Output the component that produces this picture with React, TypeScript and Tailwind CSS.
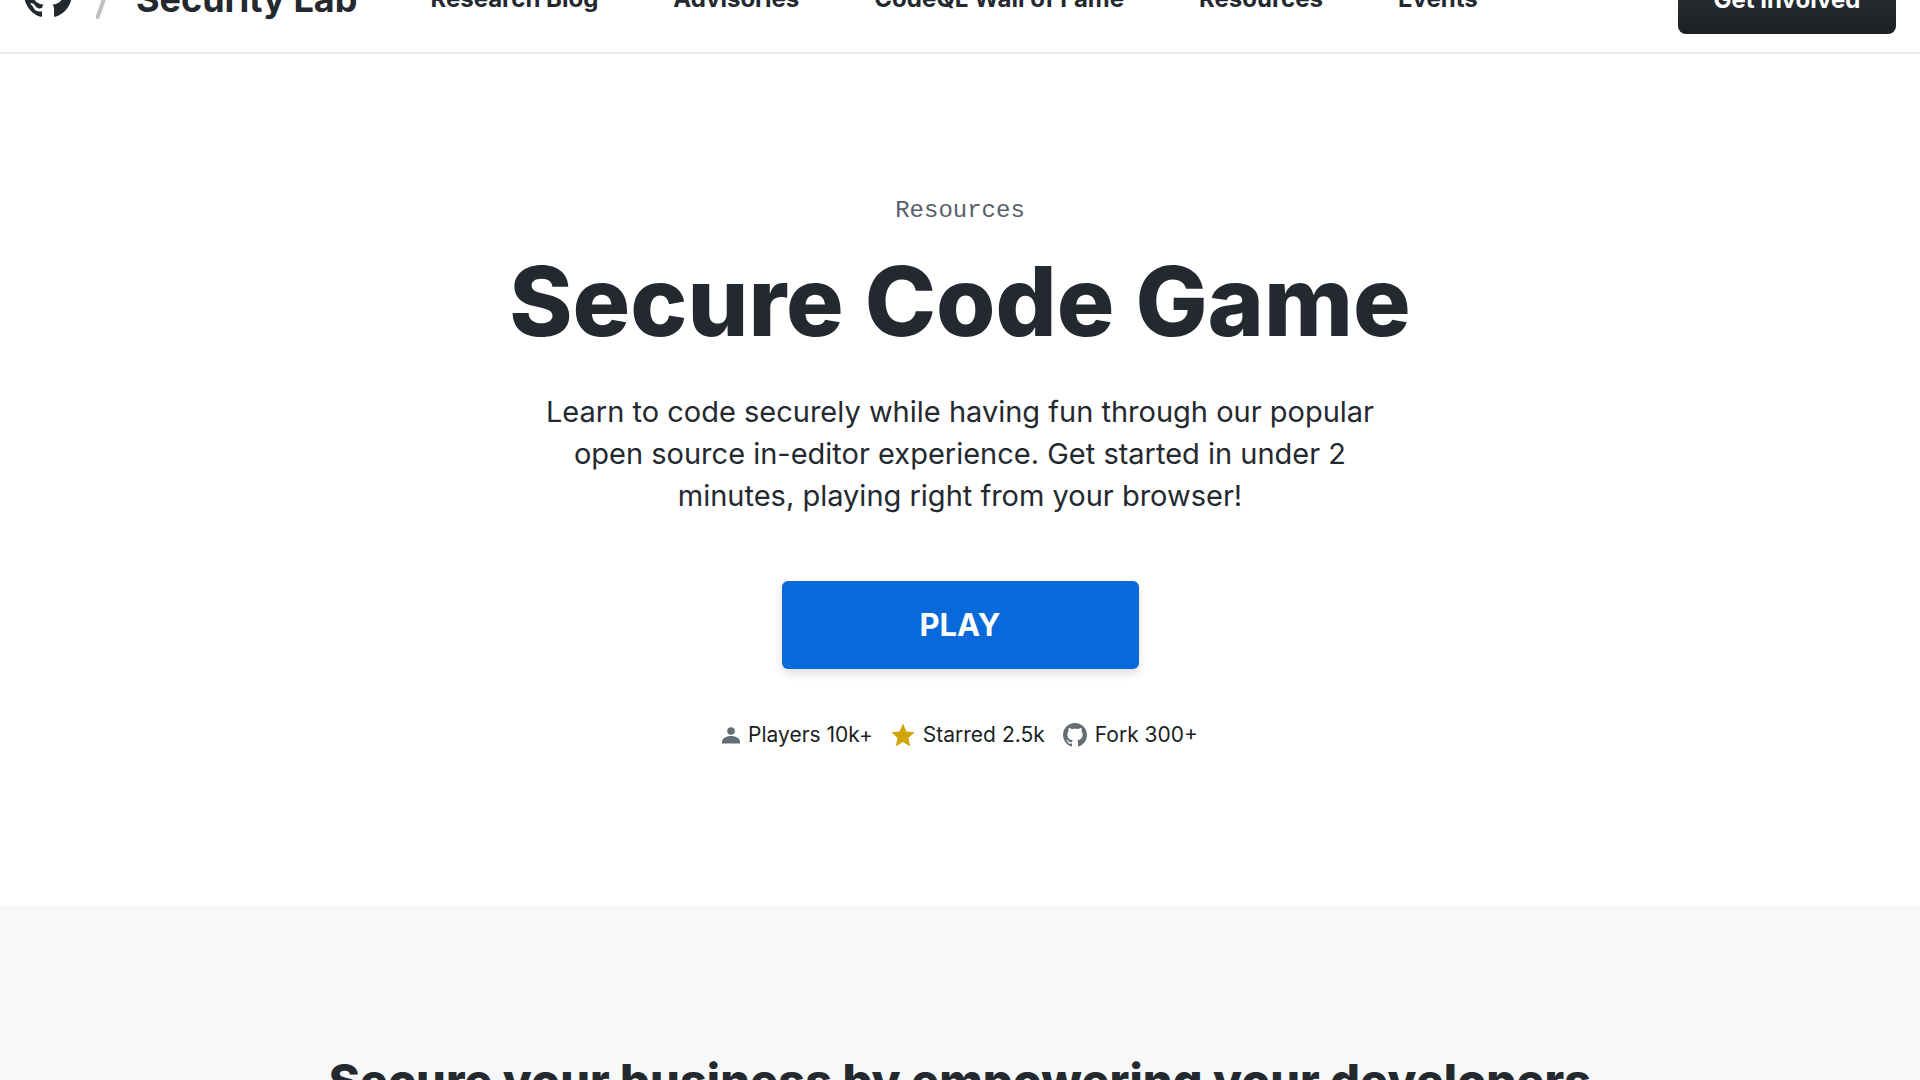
const navLinks = ["Research Blog", "Advisories", "CodeQL Wall of Fame", "Resources", "Events"]

function GithubMark({ className }: { className: string }) {
    return (
        <svg viewBox="0 0 16 16" className={className} fill="currentColor" aria-hidden="true">
            <path d="M8 0C3.58 0 0 3.58 0 8c0 3.54 2.29 6.53 5.47 7.59.4.07.55-.17.55-.38 0-.19-.01-.82-.01-1.49-2.01.37-2.53-.49-2.69-.94-.09-.23-.48-.94-.82-1.13-.28-.15-.68-.52-.01-.53.63-.01 1.08.58 1.23.82.72 1.21 1.87.87 2.33.66.07-.52.28-.87.51-1.07-1.78-.2-3.64-.89-3.64-3.95 0-.87.31-1.59.82-2.15-.08-.2-.36-1.02.08-2.12 0 0 .67-.21 2.2.82.64-.18 1.32-.27 2-.27.68 0 1.36.09 2 .27 1.53-1.04 2.2-.82 2.2-.82.44 1.1.16 1.92.08 2.12.51.56.82 1.27.82 2.15 0 3.07-1.87 3.75-3.65 3.95.29.25.54.73.54 1.48 0 1.07-.01 1.93-.01 2.2 0 .21.15.46.55.38A8.013 8.013 0 0016 8c0-4.42-3.58-8-8-8z" />
        </svg>
    )
}

function PersonIcon() {
    return (
        <svg viewBox="0 0 18 17" className="w-[18px] h-[17px]" fill="#656d76" aria-hidden="true">
            <circle cx="9" cy="4" r="3.8" />
            <path d="M0 16.5v-1.6C0 11.6 3.8 9 9 9s9 2.6 9 5.9v1.6z" />
        </svg>
    )
}

function StarIcon() {
    return (
        <svg viewBox="0 0 24 24" className="size-6" fill="#d0a508" aria-hidden="true">
            <path d="M12 0.5 15.4 8.6 23.8 9.3 17.4 15 19.3 23.5 12 19 4.7 23.5 6.6 15 0.2 9.3 8.6 8.6Z" />
        </svg>
    )
}

function Header() {
    return (
        <header className="-mt-[53px] h-[107px] shrink-0 px-6 flex items-center justify-between border-b-2 border-[#eaebec] bg-white">
            <div className="pb-0.5 flex items-center">
                <div className="flex items-center gap-6">
                    <a href="#" aria-label="GitHub" className="pb-2.5">
                        <GithubMark className="size-12" />
                    </a>
                    <svg viewBox="0 0 16 40" className="w-4 h-10" stroke="#bdc1c4" strokeWidth="4" aria-hidden="true">
                        <path d="M1 40 15 0" />
                    </svg>
                    <a href="#" className="text-4xl font-bold whitespace-nowrap">Security Lab</a>
                </div>
                <nav className="ml-[73px] flex items-center gap-[75px]">
                    {navLinks.map((label) => (
                        <a key={label} href="#" className="text-2xl font-bold whitespace-nowrap">{label}</a>
                    ))}
                </nav>
            </div>
            <a
                href="#"
                className="w-[218px] h-[68px] flex items-center justify-center rounded-lg bg-linear-to-b from-[#32383f] to-[#1b1f24] text-2xl font-bold text-white whitespace-nowrap"
            >
                Get Involved
            </a>
        </header>
    )
}

function Hero() {
    return (
        <section className="pt-[141px] pb-[153px] flex flex-col items-center text-center">
            <p className="font-['Liberation_Mono',monospace] text-2xl leading-8 text-[#57606a]">Resources</p>
            <h1 className="mt-[22px] text-[96px] leading-[104px] font-extrabold whitespace-nowrap">Secure Code Game</h1>
            <p className="mt-[38px] text-[29px] leading-[42px]">
                Learn to code securely while having fun through our popular
                <br />
                open source in-editor experience. Get started in under 2
                <br />
                minutes, playing right from your browser!
            </p>
            <button
                type="button"
                className="mt-16 w-[357px] h-[88px] rounded-md bg-[#0969da] text-[31px] font-bold text-white shadow-[0_4px_10px_rgba(0,0,0,0.14)]"
            >
                PLAY
            </button>
            <ul className="mt-12 flex items-center gap-[18px] text-[21px] leading-9 text-[#1b1f24]">
                <li className="flex items-center gap-2">
                    <PersonIcon />
                    Players 10k+
                </li>
                <li className="flex items-center gap-2">
                    <StarIcon />
                    Starred 2.5k
                </li>
                <li className="flex items-center gap-2">
                    <GithubMark className="size-6 text-[#656d76]" />
                    Fork 300+
                </li>
            </ul>
        </section>
    )
}

export default function App() {
    return (
        <div className="h-screen overflow-hidden flex flex-col bg-white font-['Inter',sans-serif] text-[#24292f]">
            <Header />
            <main className="flex-1">
                <Hero />
                <section className="pt-[139px] pb-24 bg-[#f6f8fa] text-center">
                    <h2 className="text-[47px] leading-[72px] font-extrabold">
                        Secure your business by empowering your developers
                    </h2>
                </section>
            </main>
        </div>
    )
}
